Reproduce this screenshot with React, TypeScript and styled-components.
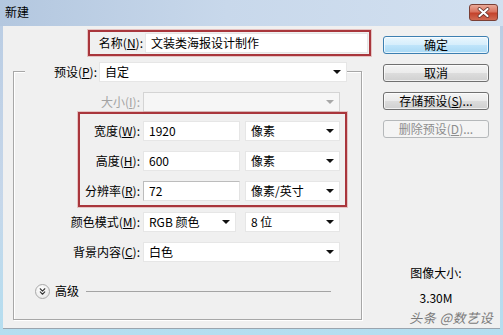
import React from 'react'
import styled, { createGlobalStyle, css } from 'styled-components'
import { ChevronsDown } from 'lucide-react'

const GlobalStyle = createGlobalStyle`
  html, body {
    margin: 0;
    padding: 0;
    background: #f0f0f0;
  }
  body {
    font-family: 'Noto Sans CJK SC', 'Noto Sans', sans-serif;
    font-size: 12px;
    color: #000;
  }
`

const Window = styled.div`
  width: 503px;
  height: 335px;
  display: flex;
  flex-direction: column;
  background: linear-gradient(180deg, #b9cce3 0%, #c6d7ea 60%, #b4def0 100%);
  box-sizing: border-box;
`

const TitleBar = styled.div`
  height: 26px;
  flex: none;
  display: flex;
  align-items: center;
  justify-content: space-between;
  padding: 0 5px 2px 5px;
  box-sizing: border-box;
  background: linear-gradient(90deg, #b3c7df 0%, #c8d8eb 45%, #d2e0f0 100%);
`

const Title = styled.span`
  font-size: 12px;
  line-height: 14px;
`

const CloseButton = styled.div`
  width: 29px;
  height: 17px;
  box-sizing: border-box;
  border: 1px solid #7a3f35;
  border-radius: 3px;
  background: linear-gradient(180deg, #e9a998 0%, #d9735f 45%, #c4432c 55%, #d06a52 100%);
  display: flex;
  align-items: center;
  justify-content: center;
`

const Client = styled.div`
  flex: 1;
  display: flex;
  margin: 0 3px 6px 3px;
  background: #f0f0f0;
  border-bottom: 1px solid #9aa4ae;
`

const LeftCol = styled.div`
  width: 368px;
  flex: none;
  display: flex;
  flex-direction: column;
`

const RedBox = styled.div<{ $ml: number; $w: number }>`
  margin-left: ${p => p.$ml}px;
  width: ${p => p.$w}px;
  box-sizing: border-box;
  border: 2px solid #a9363c;
  box-shadow: 0 0 0 1px rgba(214, 140, 140, 0.45);
`

const NameBox = styled(RedBox)`
  margin-top: 4px;
  height: 26px;
  display: flex;
  align-items: center;
  padding: 0 3px 0 2px;
`

const SizeBox = styled(RedBox)`
  display: flex;
  flex-direction: column;
  gap: 10px;
  padding: 7px 0 4px 0;
`

const GroupBox = styled.div`
  margin: 15px 0 0 10px;
  width: 349px;
  height: 249px;
  box-sizing: border-box;
  border: 1px solid #a7a7a7;
  box-shadow: inset 1px 1px 0 #fff, 1px 1px 0 #fff;
  display: flex;
  flex-direction: column;
`

const Legend = styled.div`
  margin: -10px 0 0 11px;
  align-self: flex-start;
  display: flex;
  align-items: center;
  height: 20px;
  background: #f0f0f0;
`

const Rows = styled.div`
  padding-top: 10px;
  display: flex;
  flex-direction: column;
`

const Row = styled.div<{ $mt?: number }>`
  display: flex;
  align-items: center;
  height: 20px;
  margin-top: ${p => p.$mt ?? 0}px;
`

const Label = styled.span<{ $w: number; $gap?: number; $disabled?: boolean }>`
  width: ${p => p.$w}px;
  margin-right: ${p => p.$gap ?? 3}px;
  text-align: right;
  white-space: nowrap;
  flex: none;
  line-height: 14px;
  color: ${p => (p.$disabled ? '#a3a3a3' : '#000')};
`

const U = styled.span`
  text-decoration: underline;
  text-underline-offset: 1px;
`

const fieldBase = css`
  height: 20px;
  box-sizing: border-box;
  background: #fff;
  border: 1px solid #e2e2e2;
  display: flex;
  align-items: center;
  padding-left: 5px;
  line-height: 14px;
  flex: none;
`

const Input = styled.div<{ $w: number; $focused?: boolean }>`
  ${fieldBase};
  width: ${p => p.$w}px;
  border-color: ${p => (p.$focused ? '#bcbcbc #e3e3e3 #e3e3e3 #bcbcbc' : '#e6e6e6')};
`

const Select = styled.div<{ $w: number; $ml?: number; $disabled?: boolean }>`
  ${fieldBase};
  width: ${p => p.$w}px;
  margin-left: ${p => p.$ml ?? 0}px;
  justify-content: space-between;
  padding-right: 5px;
  background: ${p => (p.$disabled ? '#f6f6f6' : '#fff')};
  border-color: ${p => (p.$disabled ? '#d4d4d4' : '#e6e6e6')};
`

const Arrow = styled.span<{ $disabled?: boolean }>`
  width: 0;
  height: 0;
  border-left: 4px solid transparent;
  border-right: 4px solid transparent;
  border-top: 4px solid ${p => (p.$disabled ? '#a8a8a8' : '#111')};
`

const Advanced = styled.div`
  margin: 21px 0 0 21px;
  width: 296px;
  display: flex;
  align-items: center;
  height: 16px;
`

const RoundToggle = styled.div`
  width: 15px;
  height: 15px;
  flex: none;
  border-radius: 50%;
  box-sizing: border-box;
  border: 1px solid #a9a9a9;
  background: radial-gradient(circle at 40% 35%, #ffffff 0%, #ececec 70%, #dcdcdc 100%);
  display: flex;
  align-items: center;
  justify-content: center;
  color: #333;
`

const AdvLabel = styled.span`
  margin-left: 5px;
  line-height: 14px;
  flex: none;
`

const Rule = styled.div`
  width: 245px;
  height: 1px;
  flex: none;
  margin-left: 7px;
  background: #a4a4a4;
`

const RightCol = styled.div`
  flex: 1;
  display: flex;
  flex-direction: column;
  padding: 10px 0 3px 12px;
`

const Button = styled.div<{ $primary?: boolean; $disabled?: boolean }>`
  width: 106px;
  height: 18px;
  margin-bottom: 10px;
  box-sizing: border-box;
  border-radius: 3px;
  display: flex;
  align-items: center;
  justify-content: center;
  line-height: 14px;
  border: 1px solid #707070;
  background: linear-gradient(180deg, #f4f4f4 0%, #ebebeb 48%, #dcdcdc 52%, #d0d0d0 100%);
  box-shadow: inset 0 0 0 1px rgba(255, 255, 255, 0.7);
  ${p =>
    p.$primary &&
    css`
      border-color: #3c7fb1;
      background: linear-gradient(180deg, #e9f6fd 0%, #d6eefc 48%, #bfe4fa 52%, #a9d9f5 100%);
    `}
  ${p =>
    p.$disabled &&
    css`
      border-color: #b5b8ba;
      background: #f4f4f4;
      color: #8d8d8d;
      box-shadow: none;
    `}
`

const Info = styled.div`
  width: 106px;
  margin-top: 118px;
  display: flex;
  flex-direction: column;
  align-items: center;
  gap: 11px;
  line-height: 14px;
`

const Watermark = styled.div`
  margin-top: auto;
  align-self: flex-end;
  margin-right: 7px;
  font-size: 13px;
  line-height: 14px;
  color: #7a7a7a;
  font-style: italic;
  letter-spacing: 0.5px;
`

export default function App() {
  return (
    <>
      <GlobalStyle />
      <Window>
        <TitleBar>
          <Title>新建</Title>
          <CloseButton>
            <svg width="13" height="11" viewBox="0 0 13 11">
              <path d="M2.5 2 L10.5 9 M10.5 2 L2.5 9" stroke="#5a2a22" strokeWidth="3.6" strokeLinecap="round" />
              <path d="M2.5 2 L10.5 9 M10.5 2 L2.5 9" stroke="#fff" strokeWidth="2.2" strokeLinecap="round" />
            </svg>
          </CloseButton>
        </TitleBar>
        <Client>
          <LeftCol>
            <NameBox $ml={85} $w={283}>
              <Label $w={51} $gap={2}>
                名称(<U>N</U>):
              </Label>
              <Input $w={223}>文装类海报设计制作</Input>
            </NameBox>
            <GroupBox>
              <Legend>
                <Label $w={72} $gap={2}>
                  预设(<U>P</U>):
                </Label>
                <Select $w={248}>
                  <span>自定</span>
                  <Arrow />
                </Select>
              </Legend>
              <Rows>
                <Row>
                  <Label $w={126} $disabled>
                    大小(<U>I</U>):
                  </Label>
                  <Select $w={197} $disabled>
                    <span />
                    <Arrow $disabled />
                  </Select>
                </Row>
                <SizeBox $ml={64} $w={269}>
                  <Row>
                    <Label $w={60}>
                      宽度(<U>W</U>):
                    </Label>
                    <Input $w={97}>1920</Input>
                    <Select $w={95} $ml={5}>
                      <span>像素</span>
                      <Arrow />
                    </Select>
                  </Row>
                  <Row>
                    <Label $w={60}>
                      高度(<U>H</U>):
                    </Label>
                    <Input $w={97}>600</Input>
                    <Select $w={95} $ml={5}>
                      <span>像素</span>
                      <Arrow />
                    </Select>
                  </Row>
                  <Row>
                    <Label $w={60}>
                      分辨率(<U>R</U>):
                    </Label>
                    <Input $w={97} $focused>
                      72
                    </Input>
                    <Select $w={95} $ml={5}>
                      <span>像素/英寸</span>
                      <Arrow />
                    </Select>
                  </Row>
                </SizeBox>
                <Row $mt={5}>
                  <Label $w={126}>
                    颜色模式(<U>M</U>):
                  </Label>
                  <Select $w={93}>
                    <span>RGB 颜色</span>
                    <Arrow />
                  </Select>
                  <Select $w={95} $ml={9}>
                    <span>8 位</span>
                    <Arrow />
                  </Select>
                </Row>
                <Row $mt={10}>
                  <Label $w={126}>
                    背景内容(<U>C</U>):
                  </Label>
                  <Select $w={197}>
                    <span>白色</span>
                    <Arrow />
                  </Select>
                </Row>
              </Rows>
              <Advanced>
                <RoundToggle>
                  <ChevronsDown size={11} strokeWidth={2.4} />
                </RoundToggle>
                <AdvLabel>高级</AdvLabel>
                <Rule />
              </Advanced>
            </GroupBox>
          </LeftCol>
          <RightCol>
            <Button $primary>确定</Button>
            <Button>取消</Button>
            <Button>
              存储预设(<U>S</U>)...
            </Button>
            <Button $disabled>
              删除预设(<U>D</U>)...
            </Button>
            <Info>
              <span>图像大小:</span>
              <span>3.30M</span>
            </Info>
            <Watermark>头条 @数艺设</Watermark>
          </RightCol>
        </Client>
      </Window>
    </>
  )
}
